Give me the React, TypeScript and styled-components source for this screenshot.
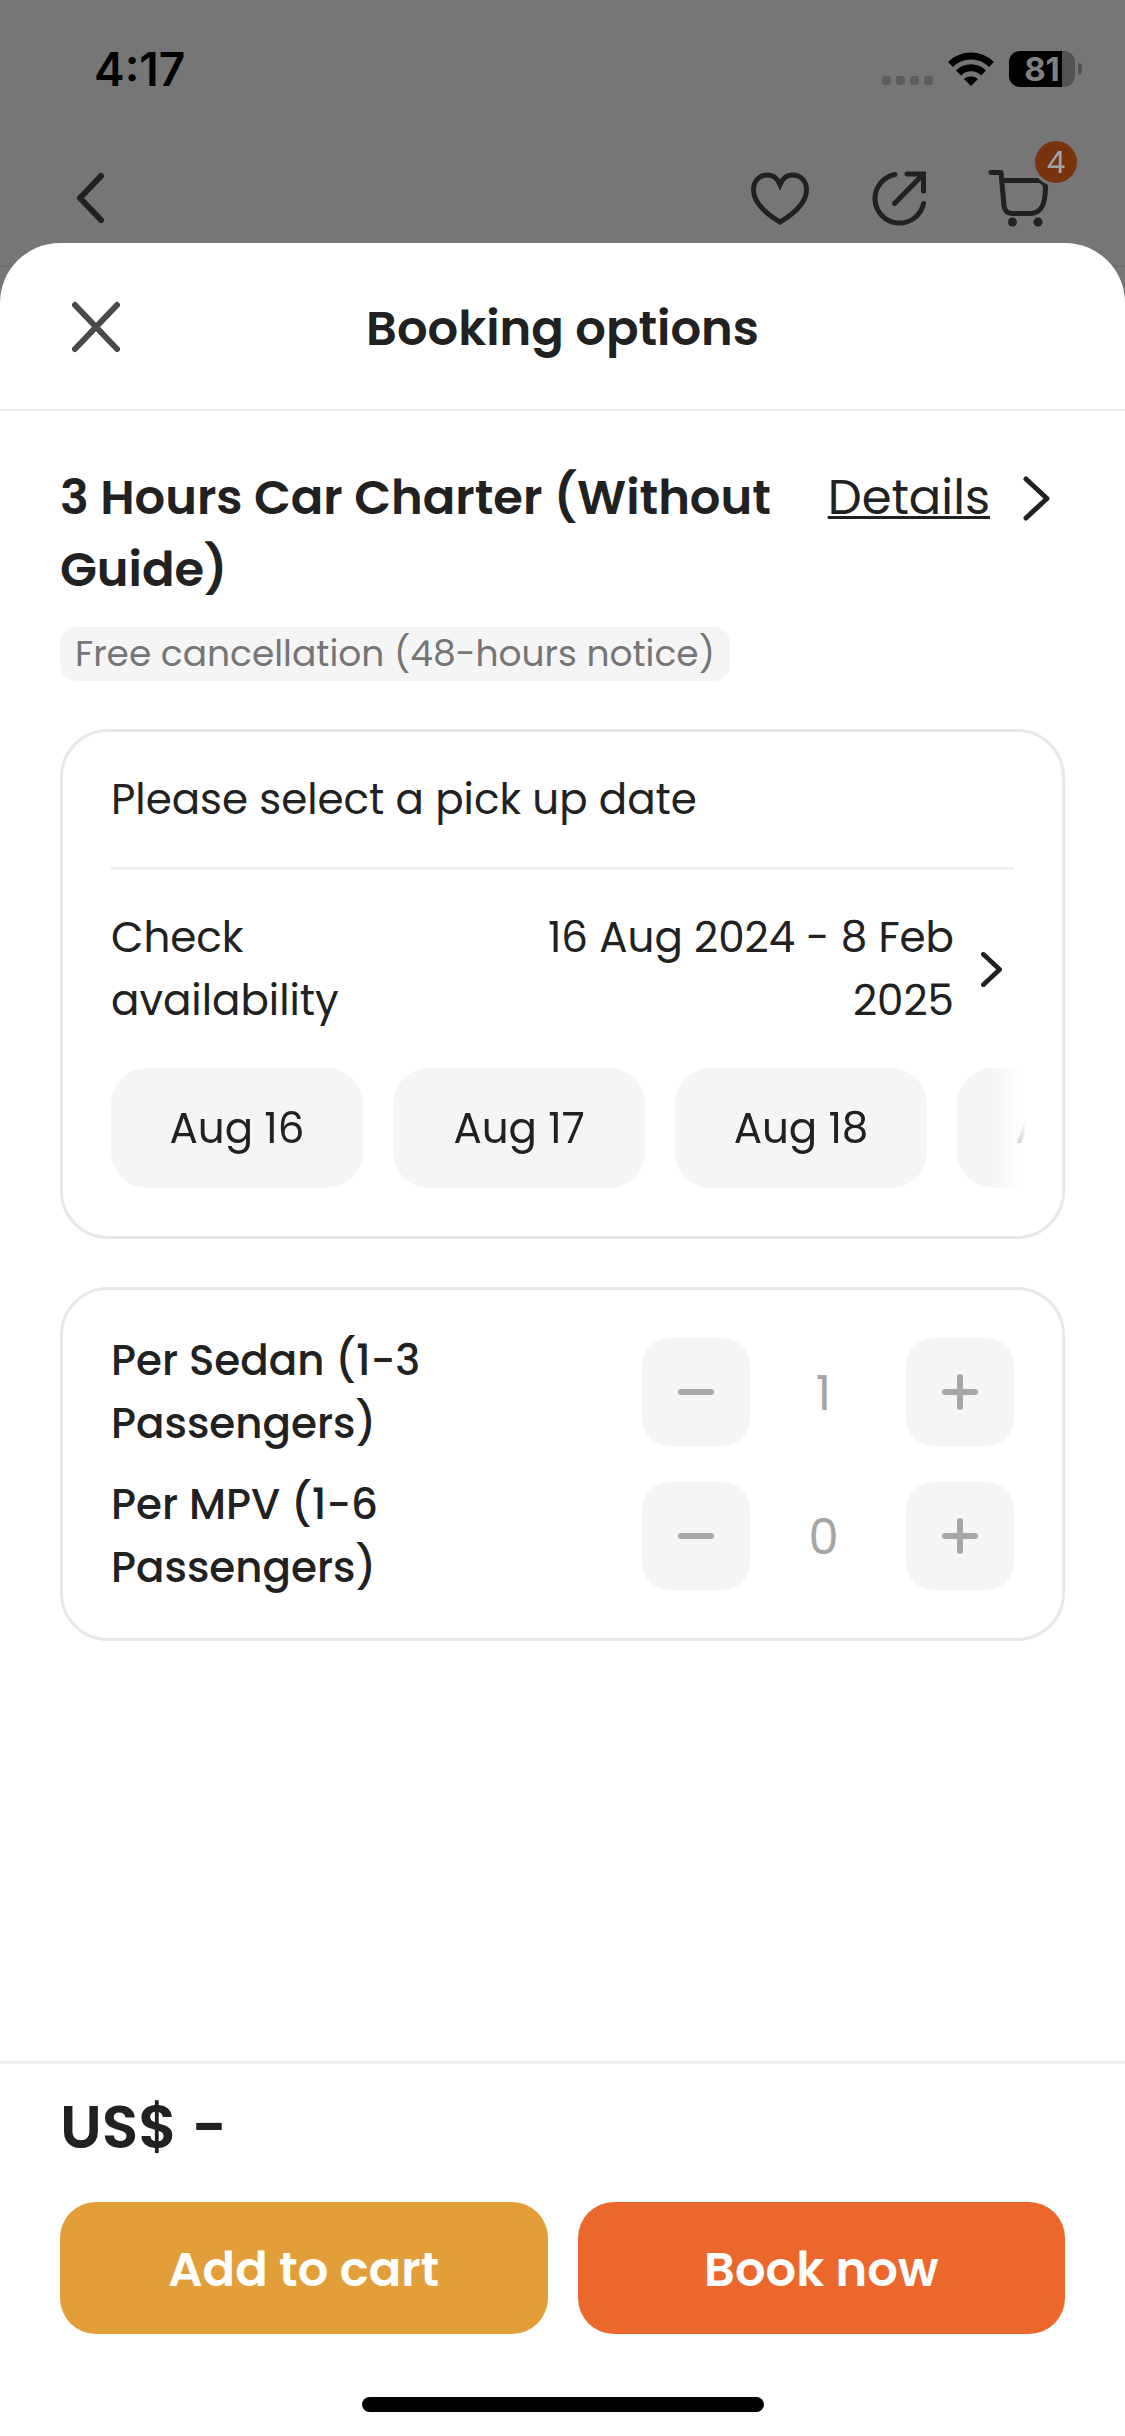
import React, { useState } from 'react';
import styled, { createGlobalStyle } from 'styled-components';

const ink = '#212121';
const hairline = '#e8e8e8';
const fill = '#f5f5f5';
const disabled = '#a6a6a6';
const systemFont = "Inter, 'Liberation Sans', sans-serif";

const GlobalStyle = createGlobalStyle`
  *, *::before, *::after { box-sizing: border-box; }
  body {
    margin: 0;
    background: #767676;
    color: ${ink};
    font-family: Poppins, Inter, 'Liberation Sans', sans-serif;
    font-size: 42px;
    line-height: 63px;
  }
  h1, h2, p { margin: 0; }
  button {
    border: 0;
    padding: 0;
    background: none;
    color: inherit;
    font: inherit;
    cursor: pointer;
  }
  svg { display: block; }
`;

const Screen = styled.div`
  display: flex;
  flex-direction: column;
  min-height: 100vh;
`;

const Backdrop = styled.div`
  height: 267px;
  border-bottom: 2px solid #6e6e6e;
`;

const StatusBar = styled.div`
  display: flex;
  align-items: center;
  justify-content: space-between;
  padding: 48px 43px 0 94px;
  color: #000;
  font-family: ${systemFont};
`;

const Clock = styled.time`
  font-size: 46px;
  line-height: 42px;
  font-weight: 600;
`;

const StatusIcons = styled.div`
  display: flex;
  align-items: center;
`;

const SignalDots = styled.div`
  display: flex;
  align-self: flex-end;
  gap: 5px;
  margin: 0 15px 2px 0;
`;

const Dot = styled.span`
  width: 9px;
  height: 9px;
  border-radius: 3px;
  background: #5c5c5c;
`;

const Battery = styled.div<{ $level: number }>`
  display: flex;
  align-items: center;
  justify-content: center;
  width: 66px;
  height: 36px;
  margin-left: 15px;
  border-radius: 11px;
  background: linear-gradient(to right, #000 ${p => p.$level}%, #535353 ${p => p.$level}%);
  color: #808080;
  font-size: 33px;
  line-height: 36px;
  font-weight: 700;
`;

const BatteryTip = styled.span`
  width: 4px;
  height: 12px;
  margin-left: 3px;
  border-radius: 0 4px 4px 0;
  background: #535353;
`;

const NavBar = styled.nav`
  display: flex;
  align-items: center;
  justify-content: space-between;
  padding: 72px 71px 0 54px;
`;

const NavActions = styled.div`
  display: flex;
  gap: 47px;
`;

const IconButton = styled.button`
  position: relative;
  display: flex;
  align-items: center;
  justify-content: center;
  width: 72px;
  height: 72px;
`;

const CartBadge = styled.span`
  position: absolute;
  top: -24px;
  right: -26px;
  width: 48px;
  height: 48px;
  border: 3px solid #767676;
  border-radius: 50%;
  background: #78340f;
  color: #a3a3a3;
  font-size: 30px;
  line-height: 44px;
  text-align: center;
`;

const Sheet = styled.main`
  display: flex;
  flex: 1;
  flex-direction: column;
  margin-top: -24px;
  border-radius: 60px 60px 0 0;
  background: #fff;
`;

const SheetHeader = styled.header`
  display: grid;
  grid-template-columns: 72px 1fr 72px;
  align-items: start;
  padding: 48px 60px 42px;
  border-bottom: 2px solid ${hairline};
`;

const SheetTitle = styled.h1`
  font-size: 48px;
  line-height: 76px;
  font-weight: 600;
  text-align: center;
`;

const Body = styled.div`
  display: flex;
  flex: 1;
  flex-direction: column;
  gap: 48px;
  padding: 51px 60px;
`;

const PackageInfo = styled.section`
  display: flex;
  flex-direction: column;
  align-items: flex-start;
  gap: 21px;
`;

const PackageRow = styled.div`
  display: flex;
  align-self: stretch;
  align-items: flex-start;
  justify-content: space-between;
  gap: 48px;
  padding-right: 15px;
`;

const PackageName = styled.h2`
  font-size: 48px;
  line-height: 72px;
  font-weight: 600;
`;

const DetailsLink = styled.a`
  display: flex;
  align-items: center;
  gap: 33px;
  color: inherit;
  font-size: 48px;
  line-height: 72px;
  text-decoration: none;

  span {
    text-decoration: underline;
    text-decoration-thickness: 3px;
    text-decoration-skip-ink: none;
    text-underline-offset: 2px;
  }
`;

const Tag = styled.span`
  padding: 0 15px;
  border-radius: 16px;
  background: ${fill};
  color: #757575;
  font-size: 36px;
  line-height: 54px;
`;

const Card = styled.section<{ $pad: string }>`
  padding: ${p => p.$pad};
  border: 3px solid ${hairline};
  border-radius: 48px;
`;

const CardPrompt = styled.p`
  padding-bottom: 36px;
  border-bottom: 3px solid #f0f0f0;
`;

const AvailabilityButton = styled.button`
  display: grid;
  grid-template-columns: 2fr 3fr auto;
  align-items: center;
  width: 100%;
  padding: 36px 12px 36px 0;
  text-align: left;
`;

const DateRange = styled.span`
  padding: 0 27px 0 48px;
  text-align: right;
`;

const ChipScroller = styled.div`
  display: flex;
  gap: 30px;
  margin-right: -12px;
  overflow: hidden;
  mask-image: linear-gradient(to right, #000 calc(100% - 36px), transparent);
`;

const DateChip = styled.button`
  flex: 0 0 252px;
  height: 120px;
  border-radius: 36px;
  background: ${fill};
`;

const QuantityRow = styled.div`
  display: grid;
  grid-template-columns: 1fr 372px;
  align-items: center;
  gap: 96px;

  & + & {
    margin-top: 18px;
  }
`;

const QuantityLabel = styled.span`
  font-weight: 500;
`;

const Stepper = styled.div`
  display: flex;
  align-items: center;
  justify-content: space-between;
  color: ${disabled};
`;

const StepButton = styled.button`
  display: flex;
  align-items: center;
  justify-content: center;
  width: 108px;
  height: 108px;
  border-radius: 27px;
  background: ${fill};
`;

const Quantity = styled.output`
  padding: 3px 9px 0 0;
  font-size: 48px;
  line-height: 72px;
`;

const Footer = styled.footer`
  padding: 18px 60px 24px;
  border-top: 3px solid #eee;
`;

const Price = styled.p`
  font-size: 60px;
  line-height: 90px;
  font-weight: 600;
`;

const Actions = styled.div`
  display: grid;
  grid-template-columns: 1fr 1fr;
  gap: 30px;
  margin-top: 30px;
`;

const ActionButton = styled.button<{ $color: string }>`
  height: 132px;
  padding-top: 3px;
  border-radius: 36px;
  background: ${p => p.$color};
  color: #fff;
  font-size: 48px;
  line-height: 72px;
  font-weight: 600;
`;

const HomeIndicator = styled.div`
  width: 402px;
  height: 15px;
  margin: 63px auto 0;
  border-radius: 8px;
  background: #000;
`;

const stroke = {
  fill: 'none',
  stroke: 'currentColor',
  strokeLinecap: 'round' as const,
  strokeLinejoin: 'round' as const,
};

const BackIcon = () => (
  <svg width="28" height="50" viewBox="0 0 28 50" {...stroke} strokeWidth="6">
    <path d="M25 3 4 25l21 22" />
  </svg>
);

const HeartIcon = () => (
  <svg width="60" height="54" viewBox="0 0 60 54" {...stroke} strokeWidth="5" strokeLinejoin="miter">
    <path d="M30 13.5C27 6.500 23 4 18 4 9 4 3.500 10 3.500 19 3.500 31 15 42 30 51 45 42 56.500 31 56.500 19 56.500 10 51 4 42 4 37 4 33 6.500 30 13.500Z" />
  </svg>
);

const ShareIcon = () => (
  <svg width="54" height="55" viewBox="0 0 54 55" {...stroke} strokeWidth="5">
    <path d="M23 3.500A24.500 24.500 0 1 0 51.500 32.500" />
    <path d="M35 3H51.500V20" strokeLinejoin="miter" />
    <path d="M22.500 32.500 50.500 4" />
  </svg>
);

const CartIcon = () => (
  <svg width="60" height="58" viewBox="0 0 60 58" {...stroke} strokeWidth="5">
    <path d="M3 3.500H13L16 37Q17 44.500 24.500 44.500H42C53 44.500 57.500 36 57.500 18Q56 11.500 50 11.500H14" />
    <circle cx="24.500" cy="53" r="4.500" fill="currentColor" stroke="none" />
    <circle cx="50" cy="53" r="4.500" fill="currentColor" stroke="none" />
  </svg>
);

const WifiIcon = () => (
  <svg width="46" height="34" viewBox="0 0 46 34" fill="none" stroke="currentColor" strokeWidth="7">
    <path d="M2.500 12.500A29 29 0 0 1 43.500 12.500" />
    <path d="M10.500 21A17.500 17.500 0 0 1 35.500 21" />
    <path d="M16 27A10 10 0 0 1 30 27L23 34Z" fill="currentColor" stroke="none" />
  </svg>
);

const CloseIcon = () => (
  <svg width="48" height="52" viewBox="0 0 48 52" {...stroke} stroke="#4a4a4a" strokeWidth="6">
    <path d="M3 4 45 48M45 4 3 48" />
  </svg>
);

const ChevronIcon = ({ size }: { size: number }) => (
  <svg width={size * 0.6} height={size} viewBox="0 0 27 45" {...stroke} strokeWidth={size > 40 ? 5 : 6}>
    <path d="M3 3 24 22.500 3 42" />
  </svg>
);

const StepIcon = ({ plus }: { plus?: boolean }) => (
  <svg width="36" height="36" viewBox="0 0 36 36" {...stroke} strokeWidth="6">
    <path d={plus ? 'M3 18H33M18 3V33' : 'M3 18H33'} />
  </svg>
);

const dates = ['Aug 16', 'Aug 17', 'Aug 18', 'Aug 19'];

function QuantityField({ label, initial }: { label: string; initial: number }) {
  const [count, setCount] = useState(initial);
  return (
    <QuantityRow role="group" aria-label={label}>
      <QuantityLabel>{label}</QuantityLabel>
      <Stepper>
        <StepButton aria-label={`Remove one, ${label}`} onClick={() => setCount(Math.max(0, count - 1))}>
          <StepIcon />
        </StepButton>
        <Quantity>{count}</Quantity>
        <StepButton aria-label={`Add one, ${label}`} onClick={() => setCount(count + 1)}>
          <StepIcon plus />
        </StepButton>
      </Stepper>
    </QuantityRow>
  );
}

export default function App() {
  return (
    <>
      <GlobalStyle />
      <Screen>
        <Backdrop>
          <StatusBar>
            <Clock>4:17</Clock>
            <StatusIcons>
              <SignalDots>
                <Dot />
                <Dot />
                <Dot />
                <Dot />
              </SignalDots>
              <WifiIcon />
              <Battery $level={80}>81</Battery>
              <BatteryTip />
            </StatusIcons>
          </StatusBar>
          <NavBar>
            <IconButton aria-label="Back">
              <BackIcon />
            </IconButton>
            <NavActions>
              <IconButton aria-label="Save to wishlist">
                <HeartIcon />
              </IconButton>
              <IconButton aria-label="Share">
                <ShareIcon />
              </IconButton>
              <IconButton aria-label="Cart">
                <CartIcon />
                <CartBadge>4</CartBadge>
              </IconButton>
            </NavActions>
          </NavBar>
        </Backdrop>

        <Sheet>
          <SheetHeader>
            <IconButton aria-label="Close">
              <CloseIcon />
            </IconButton>
            <SheetTitle>Booking options</SheetTitle>
          </SheetHeader>

          <Body>
            <PackageInfo>
              <PackageRow>
                <PackageName>3 Hours Car Charter (Without Guide)</PackageName>
                <DetailsLink href="#details">
                  <span>Details</span>
                  <ChevronIcon size={45} />
                </DetailsLink>
              </PackageRow>
              <Tag>Free cancellation (48-hours notice)</Tag>
            </PackageInfo>

            <Card $pad="36px 48px 48px">
              <CardPrompt>Please select a pick up date</CardPrompt>
              <AvailabilityButton>
                <span>Check availability</span>
                <DateRange>16 Aug 2024 - 8 Feb 2025</DateRange>
                <ChevronIcon size={35} />
              </AvailabilityButton>
              <ChipScroller>
                {dates.map(date => (
                  <DateChip key={date}>{date}</DateChip>
                ))}
              </ChipScroller>
            </Card>

            <Card $pad="39px 48px">
              <QuantityField label="Per Sedan (1-3 Passengers)" initial={1} />
              <QuantityField label="Per MPV (1-6 Passengers)" initial={0} />
            </Card>
          </Body>

          <Footer>
            <Price>US$ -</Price>
            <Actions>
              <ActionButton $color="#e29f39">Add to cart</ActionButton>
              <ActionButton $color="#eb672b">Book now</ActionButton>
            </Actions>
            <HomeIndicator />
          </Footer>
        </Sheet>
      </Screen>
    </>
  );
}
